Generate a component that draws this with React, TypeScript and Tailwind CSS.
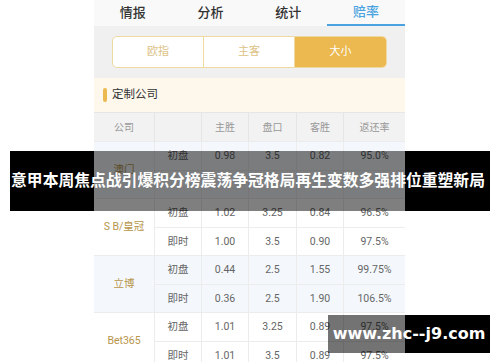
/** Odds page screenshot with headline band and watermark. */

const font = 'font-["Roboto","Noto_Sans_CJK_SC",sans-serif]';

const tabs = ['情报', '分析', '统计', '赔率'];
const segments = ['欧指', '主客', '大小'];
const headers = ['公司', '', '主胜', '盘口', '客胜', '返还率'];

// the 澳门 live row sits under the headline band, so its values stay blank
const groups = [
  {
    name: '澳门',
    bg: 'bg-[#f4f8fd]',
    rows: [
      ['初盘', '0.98', '3.5', '0.82', '95.0%'],
      ['', '', '', '', ''],
    ],
  },
  {
    name: 'S B/皇冠',
    bg: 'bg-white',
    rows: [
      ['初盘', '1.02', '3.25', '0.84', '96.5%'],
      ['即时', '1.00', '3.5', '0.90', '97.5%'],
    ],
  },
  {
    name: '立博',
    bg: 'bg-[#f4f8fd]',
    rows: [
      ['初盘', '0.44', '2.5', '1.55', '99.75%'],
      ['即时', '0.36', '2.5', '1.90', '106.5%'],
    ],
  },
  {
    name: 'Bet365',
    bg: 'bg-white',
    rows: [
      ['初盘', '1.01', '3.25', '0.89', '97.5%'],
      ['即时', '1.01', '3.5', '0.89', '97.5%'],
    ],
  },
];

const cols = 'grid grid-cols-[61px_47px_47px_48px_47px_61px]';

export default function App() {
  return (
    <div className={`relative w-[500px] h-[362px] overflow-hidden bg-white ${font}`}>
      {/* Phone screenshot column */}
      <div className="ml-[94px] w-[311px]">
        {/* Tabs */}
        <div className="grid grid-cols-4 h-[26px] bg-[#f9f9f9]">
          {tabs.map((t, i) => (
            <div
              key={t}
              className={`flex items-center justify-center text-[13px] font-medium ${
                i === 3 ? 'text-[#4aa3e0] border-b-2 border-[#4aa3e0]' : 'text-[#333]'
              }`}
            >
              {t}
            </div>
          ))}
        </div>

        {/* Segment switch */}
        <div className="h-[52px] bg-[#f0f0f0] pt-[10px] px-[18px]">
          <div className="grid grid-cols-3 h-[32px] rounded-[5px] border border-[#efd9a2] bg-white overflow-hidden">
            {segments.map((s, i) => (
              <div
                key={s}
                className={`flex items-center justify-center text-[11px] ${
                  i === 2
                    ? 'bg-[#ebb94f] text-white'
                    : 'text-[#dcc285] border-r border-[#efd9a2]'
                }`}
              >
                {s}
              </div>
            ))}
          </div>
        </div>

        {/* Section title */}
        <div className="h-[34px] bg-[#fdf7ec] flex items-center pl-[9px] gap-[5px]">
          <div className="w-[4px] h-[14px] rounded-full bg-[#ebb94f]" />
          <span className="text-[11.5px] text-[#333]">定制公司</span>
        </div>

        {/* Table header */}
        <div className={`${cols} h-[29px] bg-[#f2f2f2] border-t border-[#e6e6e6]`}>
          {headers.map((h, i) => (
            <div
              key={i}
              className={`flex items-center justify-center text-[10px] text-[#999] ${
                i < 5 ? 'border-r border-[#e6e6e6]' : ''
              }`}
            >
              {h}
            </div>
          ))}
        </div>

        {/* Table body */}
        {groups.map((g) => (
          <div key={g.name} className={`${cols} ${g.bg} border-t border-[#ececec]`}>
            <div className="row-span-2 flex items-center justify-center text-[10.5px] text-[#b8954a] border-r border-[#ececec]">
              {g.name}
            </div>
            {g.rows.map((r, ri) =>
              r.map((v, ci) => (
                <div
                  key={`${ri}-${ci}`}
                  className={`h-[28px] flex items-center justify-center text-[10.5px] text-[#666] ${
                    ci < 4 ? 'border-r border-[#ececec]' : ''
                  } ${ri === 1 ? 'border-t border-[#ececec]' : ''}`}
                >
                  {v}
                </div>
              ))
            )}
          </div>
        ))}
      </div>

      {/* Headline band */}
      <div className="absolute left-[10px] top-[151px] w-[480px] h-[60px] flex">
        <div className="w-[84px] bg-black" />
        <div className="w-[311px] bg-black/50" />
        <div className="w-[85px] bg-black" />
      </div>
      <div className="absolute left-0 top-[151px] w-[496px] h-[60px] flex items-center justify-center">
        <span className="whitespace-nowrap text-white font-bold text-[15.8px] leading-none">
          意甲本周焦点战引爆积分榜震荡争冠格局再生变数多强排位重塑新局
        </span>
      </div>

      {/* Watermark */}
      <div className="absolute left-[328px] top-[315px] h-[38px] w-[162px] flex">
        <div className="w-[77px] bg-black/55" />
        <div className="flex-1 bg-black" />
      </div>
      <div className="absolute left-[328px] top-[315px] h-[38px] w-[162px] flex items-center justify-center">
        <span className='text-white font-bold text-[16px] font-["DejaVu_Sans","Liberation_Sans",sans-serif]'>
          www.zhc--j9.com
        </span>
      </div>
    </div>
  );
}
